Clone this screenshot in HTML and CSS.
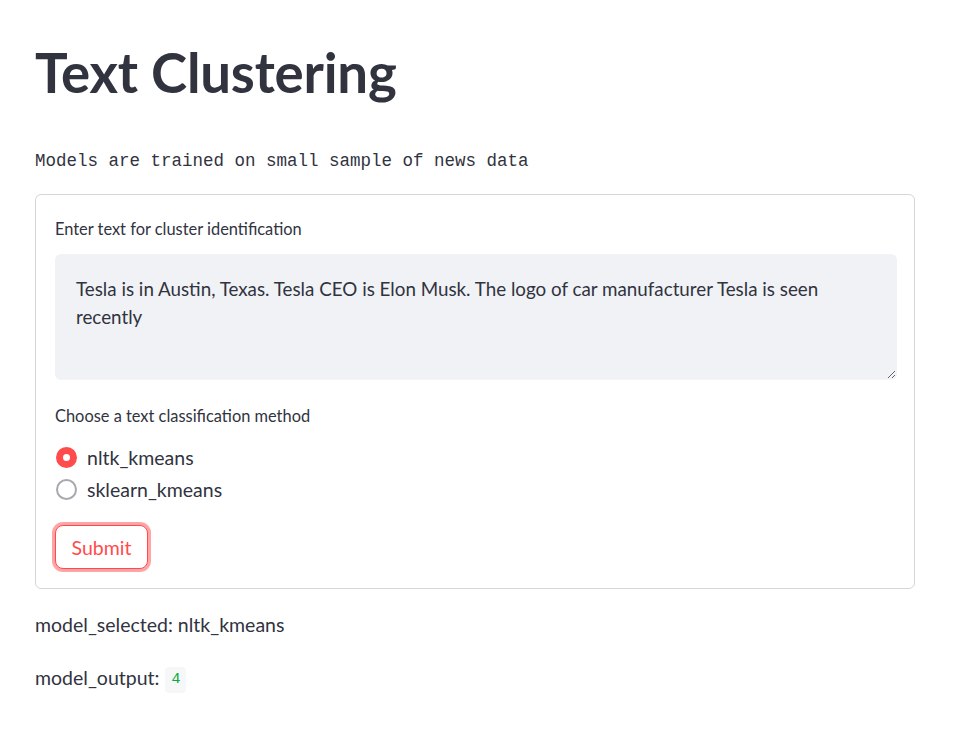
FILE: index.html
```html
<!DOCTYPE html>
<html lang="en">
<head>
<meta charset="utf-8">
<title>Text Clustering</title>
<link rel="stylesheet" href="styles.css">
</head>
<body>
<main class="main">
  <h1 class="title">Text Clustering</h1>
  <pre class="mono">Models are trained on small sample of news data</pre>
  <form class="form">
    <label class="label" for="txt">Enter text for cluster identification</label>
    <textarea id="txt" class="textarea">Tesla is in Austin, Texas. Tesla CEO is Elon Musk. The logo of car manufacturer Tesla is seen recently</textarea>
    <div class="label label-choose">Choose a text classification method</div>
    <div class="radios">
      <div class="radio-row"><span class="radio radio-on"></span><span class="radio-text">nltk_kmeans</span></div>
      <div class="radio-row"><span class="radio"></span><span class="radio-text">sklearn_kmeans</span></div>
    </div>
    <button type="button" class="button">Submit</button>
  </form>
  <p class="para">model_selected: nltk_kmeans</p>
  <p class="para para-output">model_output: <code class="code">4</code></p>
</main>
</body>
</html>
```
FILE: styles.css
```css
html, body {
  margin: 0;
  padding: 0;
  background: #ffffff;
}
body {
  color: #31333f;
  font-family: "Lato", "Open Sans", sans-serif;
}
.main {
  width: 880px;
  padding: 40px 0 0 35px;
  display: flex;
  flex-direction: column;
}
.title {
  margin: 0;
  font-size: 54.6px;
  font-weight: 700;
  line-height: 65px;
  letter-spacing: -0.2px;
  color: #31333f;
}
.mono {
  margin: 44px 0 0 0;
  font-family: "Liberation Mono", "DejaVu Sans Mono", monospace;
  font-size: 17.5px;
  line-height: 24px;
  color: #31333f;
}
.form {
  margin-top: 21px;
  border: 1px solid rgba(49, 51, 63, 0.2);
  border-radius: 6px;
  padding: 19px 17px 19px 19px;
  display: flex;
  flex-direction: column;
  align-items: flex-start;
}
.label {
  font-size: 16.4px;
  line-height: 30px;
  margin-bottom: 10px;
  color: #31333f;
}
.textarea {
  box-sizing: border-box;
  width: 100%;
  height: 126px;
  margin: 0;
  padding: 20px 20px 0 20px;
  border: 1px solid #f0f2f6;
  border-bottom-color: #f4f5f8;
  border-radius: 6px;
  background: #f0f2f6;
  color: #31333f;
  font-family: "Lato", "Open Sans", sans-serif;
  font-size: 18.8px;
  line-height: 28px;
  resize: vertical;
  outline: none;
}
.label-choose {
  margin-top: 21px;
  margin-bottom: 10px;
}
.radios {
  display: flex;
  flex-direction: column;
}
.radio-row {
  display: flex;
  align-items: center;
  height: 32px;
  gap: 10px;
  padding-left: 1px;
}
.radio {
  box-sizing: border-box;
  width: 21px;
  height: 21px;
  border-radius: 50%;
  border: 2.5px solid #a7a9b0;
  background: #ffffff;
}
.radio-on {
  border: 7px solid #ff4b4b;
  background: #ffffff;
}
.radio-text {
  font-size: 19.5px;
  color: #31333f;
}
.button {
  margin-top: 20px;
  box-sizing: border-box;
  width: 93px;
  height: 44px;
  border: 1px solid #ff4b4b;
  border-radius: 8px;
  background: #ffffff;
  color: #ff4b4b;
  font-family: "Lato", "Open Sans", sans-serif;
  font-size: 19.5px;
  padding: 0;
  box-shadow: 0 0 0 3px rgba(255, 75, 75, 0.5);
}
.para {
  margin: 21px 0 0 0;
  font-size: 19.5px;
  line-height: 30px;
  color: #31333f;
}
.para-output {
  margin-top: 23px;
}
.code {
  display: inline-block;
  font-family: "Liberation Mono", "DejaVu Sans Mono", monospace;
  font-size: 15px;
  line-height: 26px;
  padding: 0 6px;
  margin-left: 1px;
  color: #09ab3b;
  background: #f6f7f9;
  border-radius: 4px;
  vertical-align: middle;
}
```
